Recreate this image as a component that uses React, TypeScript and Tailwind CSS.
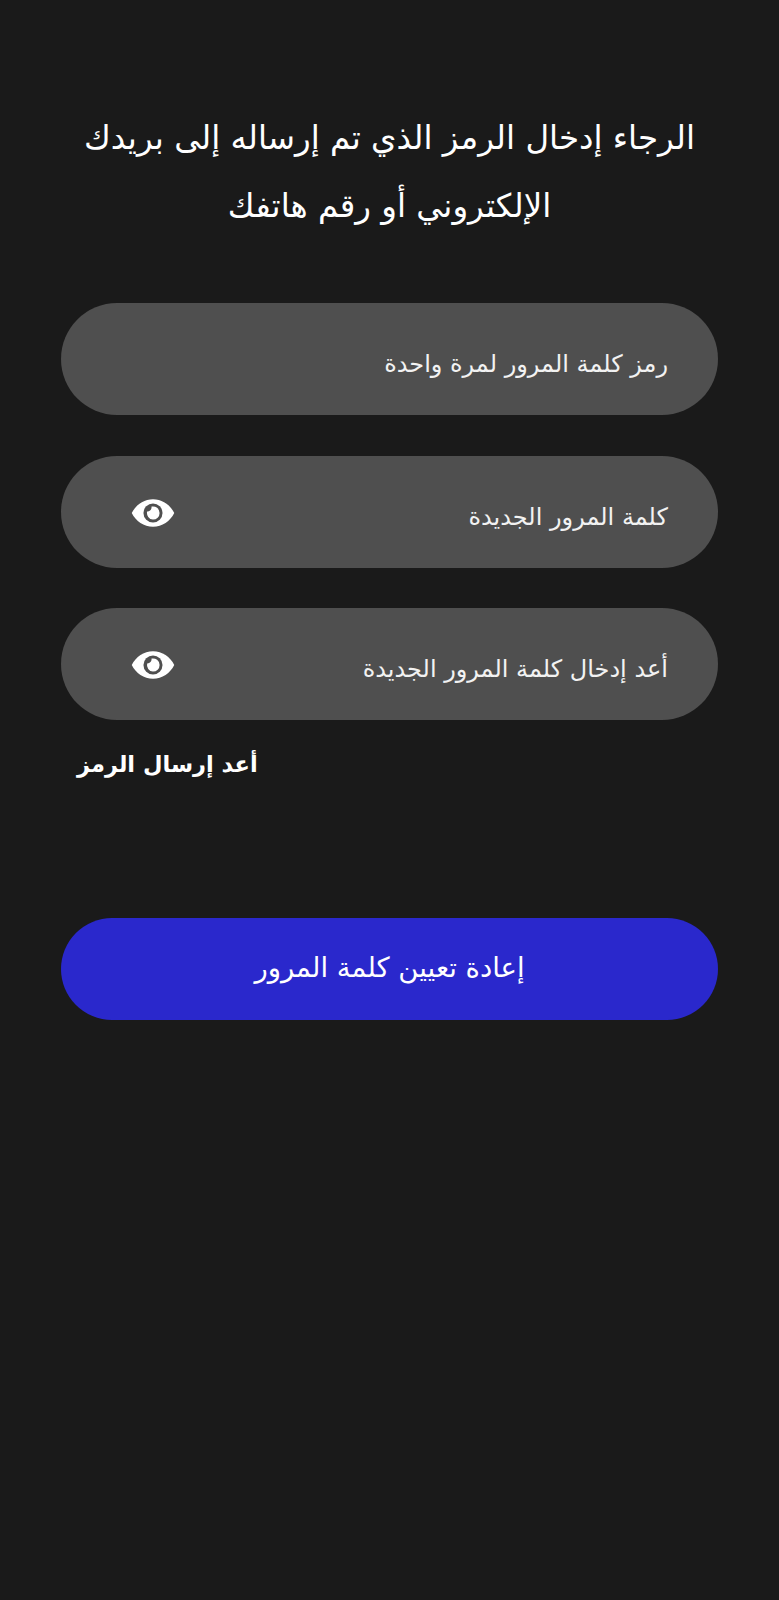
export default function App() {
  const Eye = () => (
    <svg width="44" height="44" viewBox="0 0 24 24" className="mt-[2px] shrink-0">
      <path fill="#fff" d="M12 4.5C7 4.5 2.6 7.6 .4 12c2.2 4.4 6.6 7.5 11.6 7.5s9.4-3.1 11.6-7.5C21.4 7.6 17 4.5 12 4.5z" />
      <circle cx="12" cy="12" r="5.2" fill="#4f4f4f" />
      <path fill="#fff" d="M8.8 11.2A3.6 3.6 0 0 0 12 15.6a3.6 3.6 0 0 0 3.6-3.6A3.6 3.6 0 0 0 11.2 8.5c.2 1.5-1 2.8-2.4 2.7z" />
    </svg>
  );
  const field = "flex h-[112px] items-center justify-between rounded-[56px] bg-[#4f4f4f] pl-[70px] pr-[50px]";
  const label = "pt-[10px] text-[24px] text-[#f2f2f2]";
  return (
    <div dir="rtl" className="flex min-h-[1600px] w-full flex-col bg-[#1a1a1a] px-[61px] pt-[104px] font-['DejaVu_Sans','Noto_Sans',sans-serif] text-white">
      <h1 className="-mx-[10px] text-center text-[32.5px] font-normal leading-[68px]">
        الرجاء إدخال الرمز الذي تم إرساله إلى بريدك الإلكتروني أو رقم هاتفك
      </h1>
      <div className="mt-[63px] flex flex-col gap-[40.5px]">
        <div className={field}><span className={label}>رمز كلمة المرور لمرة واحدة</span></div>
        <div className={field}><span className={label}>كلمة المرور الجديدة</span><Eye /></div>
        <div className={field}><span className={label}>أعد إدخال كلمة المرور الجديدة</span><Eye /></div>
      </div>
      <div className="mt-[28px] flex justify-end pl-[16px] text-[22.5px] font-bold">أعد إرسال الرمز</div>
      <button className="mt-[136px] h-[102px] rounded-[51px] bg-[#2a28cc] pb-[3px] text-center text-[27.5px] text-white">إعادة تعيين كلمة المرور</button>
    </div>
  );
}
